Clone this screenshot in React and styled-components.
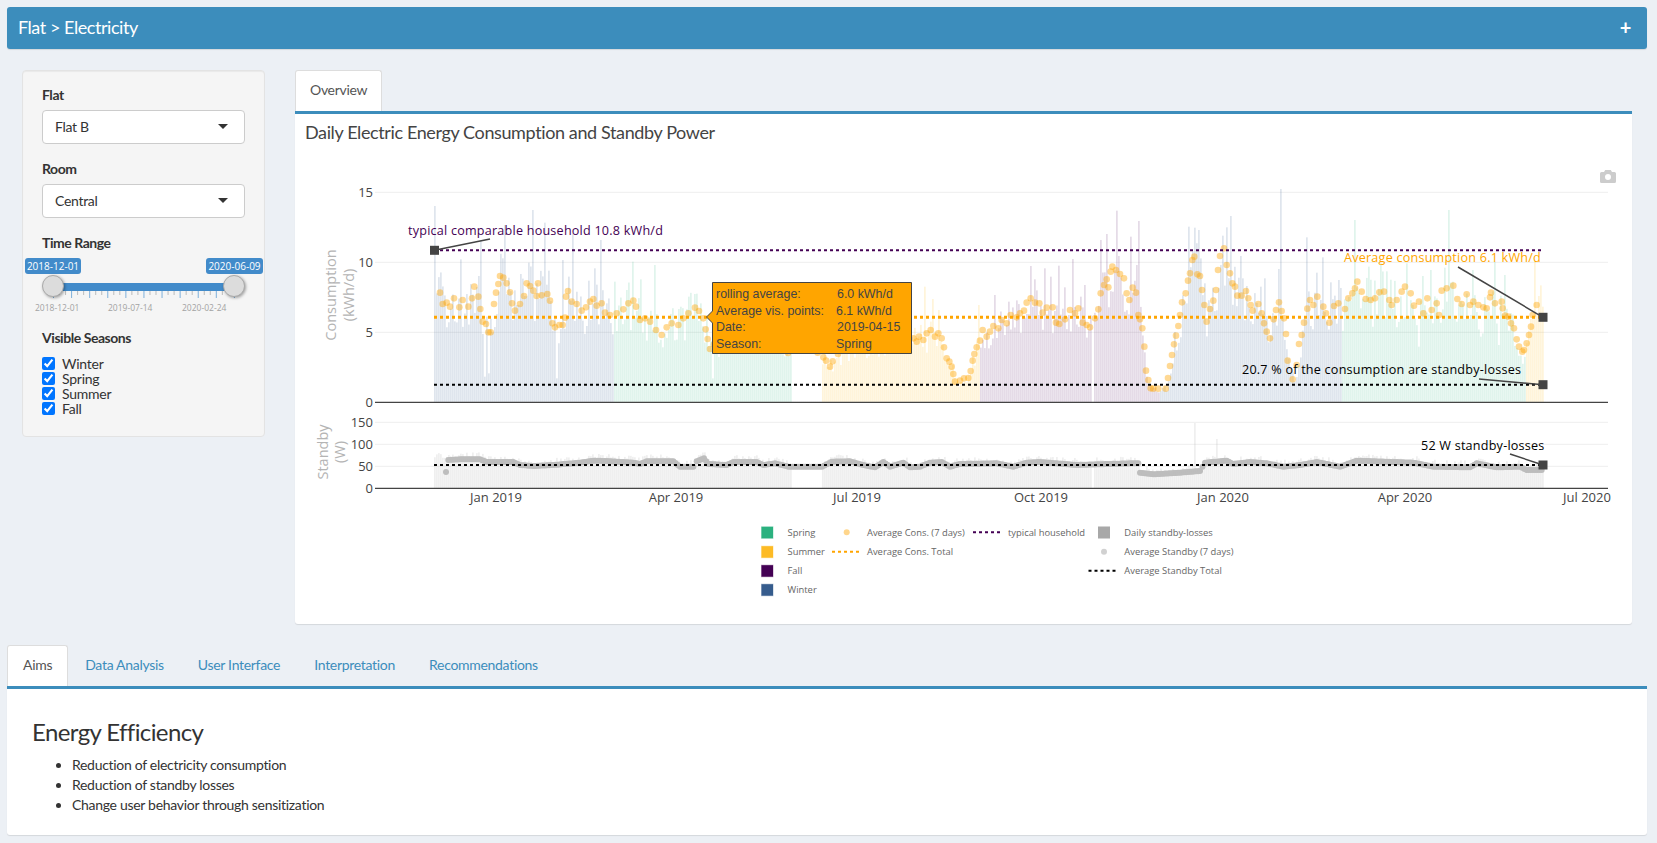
import React from 'react'
import styled, { createGlobalStyle } from 'styled-components'

const GlobalStyle = createGlobalStyle`
  html, body { margin: 0; padding: 0; background: #ecf0f5; }
  body {
    font-family: "Lato", "Open Sans", sans-serif;
    font-size: 14px;
    color: #333;
  }
`

const Page = styled.div`
  box-sizing: border-box;
  height: 843px;
  padding: 7px 10px 8px 7px;
  overflow: hidden;
`

const HeaderBar = styled.div`
  display: flex;
  justify-content: space-between;
  align-items: center;
  height: 42px;
  padding: 0 16px 2px 11px;
  box-sizing: border-box;
  background: #3c8dbc;
  border-radius: 3px;
  color: #fff;
  font-size: 18px;
  letter-spacing: -0.45px;
  box-shadow: 0 1px 1px rgba(0, 0, 0, 0.1);
`

const Plus = styled.span`
  font-size: 20px;
  font-weight: 700;
  line-height: 1;
`

const TopRow = styled.div`
  display: grid;
  grid-template-columns: 243px 1337px;
  column-gap: 30px;
  padding: 21px 0 0 15px;
`

const Well = styled.div`
  box-sizing: border-box;
  height: 367px;
  padding: 14px 19px 0;
  background: #f5f5f5;
  border: 1px solid #e3e3e3;
  border-radius: 4px;
  box-shadow: inset 0 1px 1px rgba(0, 0, 0, 0.05);
`

const FieldLabel = styled.div`
  font-weight: 700;
  color: #333;
  line-height: 20px;
  letter-spacing: -0.45px;
  margin-bottom: ${p => p.$gap || 5}px;
`

const Select = styled.div`
  display: flex;
  justify-content: space-between;
  align-items: center;
  box-sizing: border-box;
  height: 34px;
  padding: 0 16px 2px 12px;
  margin-bottom: 15px;
  background: #fff;
  border: 1px solid #ccc;
  border-radius: 4px;
  color: #333;
  letter-spacing: -0.3px;
`

const Caret = styled.span`
  width: 0;
  height: 0;
  border-left: 5px solid transparent;
  border-right: 5px solid transparent;
  border-top: 5px solid #333;
`

const SliderBox = styled.div`
  position: relative;
  height: 66px;
  margin-bottom: 4px;
`

const SliderBubble = styled.span`
  position: absolute;
  top: 0;
  left: ${p => p.$left}px;
  width: ${p => p.$width}px;
  height: 16px;
  text-align: center;
  line-height: 16px;
  font-family: "Open Sans", sans-serif;
  font-size: 10px;
  color: #fff;
  background: #428bca;
  border-radius: 3px;
`

const SliderTrack = styled.div`
  position: absolute;
  top: 25px;
  left: 11px;
  width: 181px;
  height: 8px;
  background: #428bca;
`

const SliderHandle = styled.span`
  position: absolute;
  top: 17px;
  left: ${p => p.$left}px;
  box-sizing: border-box;
  width: 22px;
  height: 22px;
  background: #dcdcdc;
  border: 1px solid #aaa;
  border-radius: 50%;
  box-shadow: 1px 1px 3px rgba(0, 0, 0, 0.35);
`

const SliderTicks = styled.svg`
  position: absolute;
  top: 33px;
  left: 0;
`

const SliderLabel = styled.span`
  position: absolute;
  top: 44px;
  left: ${p => p.$left}px;
  font-family: "Open Sans", sans-serif;
  font-size: 8.5px;
  color: #a3a3a3;
`

const CheckRow = styled.label`
  display: flex;
  align-items: center;
  gap: 7px;
  height: 15px;
  color: #333;
  letter-spacing: -0.25px;
`

const CheckBox = styled.input`
  width: 13px;
  height: 13px;
  margin: 0;
`

const TabStrip = styled.div`
  display: flex;
  height: ${p => p.$height}px;
`

const Tab = styled.div`
  box-sizing: border-box;
  height: ${p => p.$height}px;
  padding: 0 ${p => p.$pad}px 3px;
  display: flex;
  align-items: center;
  border-radius: 3px 3px 0 0;
  background: ${p => (p.$active ? '#fff' : 'transparent')};
  border: 1px solid ${p => (p.$active ? '#ddd' : 'transparent')};
  border-bottom: 0;
  color: ${p => (p.$active ? '#555' : '#3c8dbc')};
  letter-spacing: -0.3px;
`

const TabCard = styled.div`
  box-sizing: border-box;
  height: ${p => p.$height}px;
  background: #fff;
  border-top: 3px solid #3c8dbc;
  border-radius: 0 0 3px 3px;
  box-shadow: 0 1px 1px rgba(0, 0, 0, 0.1);
`

const ChartTitle = styled.h3`
  margin: 0;
  padding: 8px 0 0 10px;
  height: 36px;
  box-sizing: border-box;
  font-size: 18px;
  font-weight: 400;
  line-height: 20px;
  color: #444;
  letter-spacing: -0.38px;
`

const ChartSvg = styled.svg`
  display: block;
  font-family: "Open Sans", sans-serif;
`

const BottomSection = styled.div`
  margin-top: 21px;
`

const BottomBody = styled.div`
  padding: 29px 25px 0;
`

const Heading = styled.h3`
  margin: 0 0 9px;
  font-size: 24px;
  font-weight: 400;
  line-height: 28px;
  color: #333;
  letter-spacing: -0.6px;
`

const Bullets = styled.ul`
  margin: 0;
  padding: 0 0 0 40px;
  line-height: 20px;
  letter-spacing: -0.3px;
  color: #333;
`

// chart coordinates below are page pixels, the svg viewBox maps them
const zoomed = (ox, pts) => pts.map(([x, y]) => [ox + x / 3, 150 + y / 3])

const consAvg = [
  ...zoomed(300, [[420,428],[428,462],[440,458],[450,470],[462,445],[478,472],[488,450],[505,470],[516,445],[523,410],[535,440],[541,477],[548,515],[558,522],[565,547],[572,547],[582,462],[588,428],[595,402],[600,378],[610,383],[620,400],[630,427],[636,460],[645,482],[660,462],[672,438],[680,400],[690,408],[700,422],[714,400],[710,438],[725,436],[742,432],[750,452],[757,520],[765,532],[778,525],[788,525],[795,503],[798,440],[804,423],[815,455],[830,462],[845,482],[858,472],[870,455],[880,447],[890,467],[905,460],[915,488],[930,495],[950,490],[970,478],[985,460],[1000,452],[1008,470],[1020,510],[1035,505],[1050,515],[1068,540],[1085,555],[1100,532],[1115,520],[1135,525],[1150,505],[1165,490],[1185,473],[1197,483],[1210,505],[1217,538],[1223,567],[1230,597]]),
  // stretch that runs behind the hover box
  [722, 335], [745, 322], [765, 328], [780, 340], [788, 353], [800, 345], [812, 348],
  ...zoomed(800, [[70,622],[78,632],[90,650],[98,634],[130,590],[200,575],[280,570],[340,565],[350,575],[357,560],[370,570],[380,550],[392,540],[405,560],[415,550],[425,565],[432,592],[440,625],[448,635],[455,650],[460,672],[465,695],[480,692],[492,685],[505,684],[512,663],[518,632],[523,612],[530,592],[540,572],[548,540],[560,560],[570,545],[580,528],[595,535],[605,510],[620,520],[632,495],[650,502],[660,490],[672,482],[680,458],[692,445],[705,458],[718,460],[728,488],[740,473],[758,472],[768,518],[778,522],[795,508],[810,480],[825,490],[835,475],[848,518],[860,525],[870,532],[885,505],[895,478],[902,430],[912,405],[920,388],[925,412],[932,365],[937,350],[948,360],[960,372],[972,385],[980,430],[988,450],[998,413],[1008,428],[1015,495],[1020,508],[1027,535],[1033,590],[1038,662],[1045,690],[1052,715],[1060,716],[1075,716],[1097,716],[1104,684],[1110,648],[1116,615],[1122,583],[1128,557],[1135,528],[1140,495],[1146,457],[1157,430],[1164,392],[1170,370],[1177,330],[1183,320],[1192,373],[1200,378],[1206,420],[1213,465],[1220,515],[1230,477],[1240,452],[1248,420],[1254,360],[1260,318],[1272,295],[1280,345],[1290,370],[1297,400],[1305,410],[1312,437],[1325,437],[1338,423],[1345,445],[1352,465],[1358,482],[1375,462],[1385,490],[1392,520],[1400,545],[1410,565],[1421,508],[1428,480],[1437,457],[1445,483],[1452,505],[1458,552],[1463,632],[1478,688],[1490,645],[1497,582]]),
  ...zoomed(1220, [[245,555],[252,518],[262,476],[270,450],[280,465],[292,440],[310,470],[318,490],[328,518],[342,468],[355,460],[375,477],[385,445],[397,430],[405,415],[412,395],[425,425],[437,447],[452,450],[465,445],[478,427],[492,425],[508,450],[515,465],[530,450],[545,425],[555,410],[572,430],[582,467],[597,455],[610,490],[622,445],[635,480],[650,460],[657,495],[665,422],[680,415],[700,407],[712,447],[725,462],[740,433],[750,465],[760,455],[775,465],[790,472],[800,475],[810,442],[813,428],[825,460],[845,455],[848,475],[855,497],[865,500],[873,520],[882,535],[890,568],[897,590],[907,605],[912,600],[920,580],[927,555],[933,530],[938,495],[950,465]]),
]

const standbyAvg = [
  ...zoomed(300, [[445,930],[480,928],[540,928],[560,936],[640,936],[660,945],[700,948],[760,945],[840,938],[880,932],[920,933],[1000,938],[1020,942],[1040,934],[1120,934],[1140,950],[1180,950],[1190,934],[1212,925],[1225,942],[1280,945],[1300,936],[1370,936],[1390,945],[1425,940],[1465,950]]),
  ...zoomed(800, [[66,950],[95,935],[150,934],[190,945],[225,952],[250,936],[270,950],[310,938],[330,952],[360,950],[390,938],[425,936],[450,950],[480,942],[590,940],[640,950],[680,938],[720,936],[830,945],[990,940],[1015,940],[1020,968],[1060,973],[1140,968],[1200,963],[1215,938],[1280,932],[1300,942],[1350,936],[1400,940],[1450,950],[1500,945]]),
  ...zoomed(1220, [[290,936],[360,950],[410,932],[580,938],[640,950],[750,952],[770,940],[830,952],[900,950],[920,960],[965,960]]),
]

const consPeaks = [
  ...zoomed(300, [[404,168],[408,430],[480,328],[540,270],[535,378],[612,225],[696,180],[684,338],[660,372],[730,218],[744,362],[786,330],[815,250],[865,392],[885,355],[900,270],[940,395],[995,335],[1062,345],[1018,388],[980,420],[1165,440],[1180,432],[555,680],[562,670],[770,685],[1238,685]]),
  ...zoomed(800, [[375,410],[397,447],[415,480],[535,465],[585,435],[627,455],[690,348],[702,388],[733,355],[750,380],[775,347],[793,412],[816,327],[840,440],[853,405],[900,270],[918,252],[948,182],[955,318],[990,260],[1013,213],[1007,345],[1163,230],[1180,233],[1192,240],[1290,198],[1276,232],[1320,318],[1325,385],[1390,385],[1378,410],[1440,117],[1432,357]]),
  ...zoomed(1220, [[257,262],[305,322],[287,368],[328,397],[352,390],[400,210],[443,350],[482,340],[682,180],[605,378],[633,360],[560,340],[825,335],[855,375],[758,360],[942,335],[957,438],[968,470],[595,590],[780,560],[833,585]]),
]

const interpolate = (pts, x) => {
  const sorted = [...pts].sort((a, b) => a[0] - b[0])
  if (x <= sorted[0][0]) return sorted[0][1]
  for (let i = 1; i < sorted.length; i++) {
    if (x <= sorted[i][0]) {
      const [x0, y0] = sorted[i - 1]
      const [x1, y1] = sorted[i]
      return y0 + ((y1 - y0) * (x - x0)) / (x1 - x0 || 1)
    }
  }
  return sorted[sorted.length - 1][1]
}

let seed = 41
const rand = () => {
  seed = (seed * 16807) % 2147483647
  return seed / 2147483647
}

const Y0 = 402.3
const SY0 = 488.3
const X0 = 434

const seasonOf = x => {
  if (x < 613) return ['#365c8d', 0.16]
  if (x < 822) return ['#2bb17f', 0.146]
  if (x < 980) return ['#fdbb25', 0.17]
  if (x < 1160) return ['#440154', 0.14]
  if (x < 1342) return ['#365c8d', 0.16]
  if (x < 1526) return ['#2bb17f', 0.146]
  return ['#fdbb25', 0.17]
}

const isGap = x => (x > 790 && x < 822) || (x > 1090 && x < 1093)

const consBars = []
const standbyBars = []
for (let x = X0; x < 1544; x += 2) {
  if (isGap(x)) continue
  const avg = (Y0 - interpolate(consAvg, x)) * (0.72 + rand() * 0.5)
  consBars.push({ x, top: Y0 - avg })
  standbyBars.push({ x, top: interpolate(standbyAvg, x) - rand() * 7 })
}
consPeaks.forEach(([px, py]) => {
  const bar = consBars.reduce((a, b) => (Math.abs(b.x - px) < Math.abs(a.x - px) ? b : a))
  bar.top = py
})
standbyBars.forEach(b => {
  if (Math.abs(b.x - 1194) < 1.5) b.top = 423
  if (Math.abs(b.x - 1216) < 1.5) b.top = 439
})

// densify so neighbouring dots overlap the way daily points do
const densify = (pts, step) => {
  const sorted = [...pts].sort((a, b) => a[0] - b[0])
  const out = []
  sorted.forEach((p, i) => {
    out.push(p)
    const n = sorted[i + 1]
    if (!n) return
    const parts = Math.floor((n[0] - p[0]) / step)
    for (let k = 1; k < parts; k++) {
      out.push([p[0] + ((n[0] - p[0]) * k) / parts, p[1] + ((n[1] - p[1]) * k) / parts])
    }
  })
  return out
}

const grid = [192.3, 262.3, 332.3, 422.3, 444.3, 466.3]
const yTicks = [
  ['15', 192.3], ['10', 262.3], ['5', 332.3], ['0', 402.3],
  ['150', 422.3], ['100', 444.3], ['50', 466.3], ['0', 488.3],
]
const xTicks = [
  ['Jan 2019', 496], ['Apr 2019', 676], ['Jul 2019', 857], ['Oct 2019', 1041],
  ['Jan 2020', 1223], ['Apr 2020', 1405], ['Jul 2020', 1587],
]

const Marker = ({ x, y }) => <rect x={x - 4.5} y={y - 4.5} width="9" height="9" fill="#444" />

const Note = ({ x, y, from, to, color = '#000', children }) => (
  <g>
    <text x={x} y={y} fontSize="12.6" fill={color} letterSpacing="0.22">{children}</text>
    <line x1={from[0]} y1={from[1]} x2={to[0]} y2={to[1]} stroke="#444" strokeWidth="1.5" />
    <Marker x={to[0]} y={to[1]} />
  </g>
)

const DashLine = ({ y, color, width = 2 }) => (
  <line x1={X0} x2="1543" y1={y} y2={y} stroke={color} strokeWidth={width} strokeDasharray="3 3" />
)

const LegendText = ({ x, y, children }) => (
  <text x={x} y={y + 3.5} fontSize="9.4" fill="#666">{children}</text>
)

const LegendDash = ({ x, y, color }) => (
  <line x1={x} x2={x + 27.5} y1={y} y2={y} stroke={color} strokeWidth="2" strokeDasharray="3 3" />
)

const Legend = () => (
  <g>
    {[['Spring', '#2bb17f', 532.3], ['Summer', '#fdbb25', 551.7], ['Fall', '#440154', 570.7], ['Winter', '#365c8d', 589.7]].map(([name, color, y]) => (
      <g key={name}>
        <rect x="761.5" y={y - 5.5} width="11.5" height="11.5" fill={color} stroke={color} strokeOpacity="0.35" />
        <LegendText x={787.5} y={y}>{name}</LegendText>
      </g>
    ))}
    <circle cx="846.7" cy="532.3" r="3" fill="#ffa500" opacity="0.45" />
    <LegendText x={867} y={532.3}>Average Cons. (7 days)</LegendText>
    <LegendDash x={832} y={551.7} color="#ffa500" />
    <LegendText x={867} y={551.7}>Average Cons. Total</LegendText>
    <LegendDash x={973} y={532.3} color="#440154" />
    <LegendText x={1008} y={532.3}>typical household</LegendText>
    <rect x="1098" y="526.5" width="12" height="12" fill="#a8a8a8" />
    <LegendText x={1124.3} y={532.3}>Daily standby-losses</LegendText>
    <circle cx="1104" cy="551.7" r="3" fill="#999" opacity="0.45" />
    <LegendText x={1124.3} y={551.7}>Average Standby (7 days)</LegendText>
    <LegendDash x={1088.5} y={570.7} color="#000" />
    <LegendText x={1124.3} y={570.7}>Average Standby Total</LegendText>
  </g>
)

const HoverBox = () => (
  <g fontFamily={'"Liberation Sans", Arial, sans-serif'} fontSize="12.4" fill="#444">
    <path d="M712.5 282.5H911.5V353.5H712.5V323L706.5 317L712.5 311Z" fill="#ffa500" stroke="#444" />
    <text x="716" y="297.5">rolling average:</text>
    <text x="837" y="297.5">6.0 kWh/d</text>
    <text x="716" y="315">Average vis. points:</text>
    <text x="836" y="315">6.1 kWh/d</text>
    <text x="716" y="330.5">Date:</text>
    <text x="837" y="330.5">2019-04-15</text>
    <text x="716" y="348">Season:</text>
    <text x="836" y="348">Spring</text>
  </g>
)

const Camera = () => (
  <path
    d="M1600 173.5a1.5 1.5 0 0 1 1.5-1.5h2.5l1.2-2h5.6l1.2 2h2.5a1.5 1.5 0 0 1 1.5 1.5v8a1.5 1.5 0 0 1-1.5 1.5h-13a1.5 1.5 0 0 1-1.5-1.5zM1608 174a3 3 0 1 0 0 6a3 3 0 0 0 0-6z"
    fill="#ccc"
    fillRule="evenodd"
  />
)

const EnergyChart = () => (
  <ChartSvg width="1337" height="471" viewBox="295 150 1337 471">
    {grid.map(y => (
      <line key={y} x1="375" x2="1608" y1={y} y2={y} stroke="#eee" />
    ))}
    {consBars.map(b => {
      const [fill, alpha] = seasonOf(b.x)
      return <rect key={b.x} x={b.x} y={b.top} width="1.75" height={Y0 - b.top} fill={fill} opacity={alpha} />
    })}
    {standbyBars.map(b => (
      <rect key={b.x} x={b.x} y={b.top} width="1.75" height={SY0 - b.top} fill="#bbb" opacity="0.24" />
    ))}
    <line x1="375" x2="1608" y1={Y0} y2={Y0} stroke="#444" strokeWidth="1.3" />
    <line x1="375" x2="1608" y1={SY0} y2={SY0} stroke="#444" strokeWidth="1.3" />

    <g fill="#bdbdbd">
      {densify(standbyAvg, 2).map(([x, y], i) => (
        <circle key={i} cx={x} cy={y} r="3" />
      ))}
      <circle cx="446" cy="472" r="3" />
    </g>
    {densify(consAvg, 4).map(([x, y], i) => (
      <circle key={i} cx={x} cy={y} r="3.3" fill="#ffa500" opacity="0.42" />
    ))}

    <DashLine y={250.3} color="#440154" />
    <DashLine y={317.3} color="#ffa500" width={3} />
    <DashLine y={384.7} color="#000" />
    <DashLine y={465} color="#000" />

    {yTicks.map(([label, y]) => (
      <text key={label + y} x="373" y={y + 4.5} textAnchor="end" fontSize="13" fill="#444">{label}</text>
    ))}
    {xTicks.map(([label, x]) => (
      <text key={label} x={x} y="502" textAnchor="middle" fontSize="13" fill="#444">{label}</text>
    ))}

    <g textAnchor="middle" fontSize="14.5" fill="#b4b4b4">
      <text transform="translate(336 295) rotate(-90)">Consumption</text>
      <text transform="translate(354 295) rotate(-90)">(kWh/d)</text>
      <text transform="translate(328 452) rotate(-90)">Standby</text>
      <text transform="translate(345 452) rotate(-90)">(W)</text>
    </g>

    <Note x={408} y={235} from={[490, 239]} to={[434.5, 250.3]} color="#440154">typical comparable household 10.8 kWh/d</Note>
    <Note x={1344} y={262} from={[1458, 267]} to={[1543, 317.3]} color="#ffa500">Average consumption 6.1 kWh/d</Note>
    <Note x={1242} y={374} from={[1479, 379]} to={[1543, 384.7]}>20.7 % of the consumption are standby-losses</Note>
    <Note x={1421} y={450} from={[1510, 454]} to={[1543, 465]}>52 W standby-losses</Note>

    <HoverBox />
    <Camera />
    <Legend />
  </ChartSvg>
)

const sliderTicks = Array.from({ length: 31 }, (_, i) => i)

const TimeRange = () => (
  <SliderBox>
    <SliderTrack />
    <SliderTicks width="204" height="10">
      {sliderTicks.map(i => (
        <line
          key={i}
          x1={11.5 + i * 6.03}
          x2={11.5 + i * 6.03}
          y1="0"
          y2={i % 3 === 0 ? 7 : 4}
          stroke={i % 3 === 0 ? '#7fb0da' : '#bbb'}
        />
      ))}
    </SliderTicks>
    <SliderBubble $left={-17} $width={56}>2018-12-01</SliderBubble>
    <SliderBubble $left={164} $width={57}>2020-06-09</SliderBubble>
    <SliderHandle $left={0} />
    <SliderHandle $left={181} />
    <SliderLabel $left={-7}>2018-12-01</SliderLabel>
    <SliderLabel $left={66}>2019-07-14</SliderLabel>
    <SliderLabel $left={140}>2020-02-24</SliderLabel>
  </SliderBox>
)

const Sidebar = () => (
  <Well>
    <FieldLabel>Flat</FieldLabel>
    <Select>Flat B<Caret /></Select>
    <FieldLabel>Room</FieldLabel>
    <Select>Central<Caret /></Select>
    <FieldLabel>Time Range</FieldLabel>
    <TimeRange />
    <FieldLabel $gap={8}>Visible Seasons</FieldLabel>
    {['Winter', 'Spring', 'Summer', 'Fall'].map(name => (
      <CheckRow key={name}>
        <CheckBox type="checkbox" defaultChecked />
        {name}
      </CheckRow>
    ))}
  </Well>
)

const App = () => (
  <Page>
    <GlobalStyle />
    <HeaderBar>
      Flat &gt; Electricity
      <Plus>+</Plus>
    </HeaderBar>

    <TopRow>
      <Sidebar />
      <div>
        <TabStrip $height={41}>
          <Tab $active $height={41} $pad={14}>Overview</Tab>
        </TabStrip>
        <TabCard $height={513}>
          <ChartTitle>Daily Electric Energy Consumption and Standby Power</ChartTitle>
          <EnergyChart />
        </TabCard>
      </div>
    </TopRow>

    <BottomSection>
      <TabStrip $height={41}>
        <Tab $active $height={41} $pad={15}>Aims</Tab>
        <Tab $height={41} $pad={16}>Data Analysis</Tab>
        <Tab $height={41} $pad={16}>User Interface</Tab>
        <Tab $height={41} $pad={16}>Interpretation</Tab>
        <Tab $height={41} $pad={16}>Recommendations</Tab>
      </TabStrip>
      <TabCard $height={149}>
        <BottomBody>
          <Heading>Energy Efficiency</Heading>
          <Bullets>
            <li>Reduction of electricity consumption</li>
            <li>Reduction of standby losses</li>
            <li>Change user behavior through sensitization</li>
          </Bullets>
        </BottomBody>
      </TabCard>
    </BottomSection>
  </Page>
)

export default App
